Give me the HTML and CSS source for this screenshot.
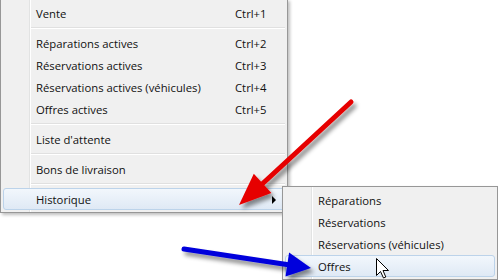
FILE: index.html
```html
<!DOCTYPE html>
<html lang="fr">
<head>
<meta charset="utf-8">
<link rel="stylesheet" href="styles.css">
</head>
<body>
<div class="page">
  <div class="menu main-menu">
    <div class="item"><span class="label">Vente</span><span class="key">Ctrl+1</span></div>
    <div class="sep"></div>
    <div class="item"><span class="label">Réparations actives</span><span class="key">Ctrl+2</span></div>
    <div class="item"><span class="label">Réservations actives</span><span class="key">Ctrl+3</span></div>
    <div class="item"><span class="label">Réservations actives (véhicules)</span><span class="key">Ctrl+4</span></div>
    <div class="item"><span class="label">Offres actives</span><span class="key">Ctrl+5</span></div>
    <div class="sep"></div>
    <div class="item"><span class="label">Liste d'attente</span></div>
    <div class="sep"></div>
    <div class="item"><span class="label">Bons de livraison</span></div>
    <div class="sep"></div>
    <div class="item active"><span class="label">Historique</span><span class="sub-arrow"></span></div>
  </div>

  <div class="menu submenu">
    <div class="item"><span class="label">Réparations</span></div>
    <div class="item"><span class="label">Réservations</span></div>
    <div class="item"><span class="label">Réservations (véhicules)</span></div>
    <div class="item active"><span class="label">Offres</span></div>
  </div>

  <svg class="annotations" width="498" height="280" viewBox="0 0 498 280">
    <defs>
      <filter id="shadow" x="-20%" y="-20%" width="140%" height="140%">
        <feDropShadow dx="3" dy="4" stdDeviation="2" flood-color="#000" flood-opacity="0.45"/>
      </filter>
    </defs>
    <g filter="url(#shadow)">
      <line x1="351" y1="102" x2="260" y2="186" stroke="#e60000" stroke-width="5" stroke-linecap="round"/>
      <polygon points="239,205 271.4,192.9 253.8,173.7" fill="#e60000"/>
    </g>
    <g filter="url(#shadow)">
      <line x1="184" y1="249" x2="290" y2="265" stroke="#0000dc" stroke-width="5" stroke-linecap="round"/>
      <polygon points="311,268 285.5,276.4 289.1,252.6" fill="#0000dc"/>
    </g>
    <path class="cursor" d="M376.5,258.5 L376.5,275.5 L380.5,271.5 L383.5,278 L385.8,277 L383,270.5 L388.5,270.5 Z" fill="#fff" stroke="#000" stroke-width="1" stroke-linejoin="miter"/>
  </svg>
</div>
</body>
</html>
```

FILE: styles.css
```css
html, body {
  margin: 0;
  padding: 0;
  background: #fff;
}

.page {
  position: relative;
  width: 498px;
  height: 280px;
  overflow: hidden;
  font-family: "Open Sans", "Noto Sans", sans-serif;
  font-size: 11.3px;
  color: #111;
}

.menu {
  box-sizing: border-box;
  border: 1px solid #979797;
  background:
    linear-gradient(to right,
      transparent 28px, #e2e3e3 28px, #e2e3e3 29px,
      #ffffff 29px, #ffffff 30px, transparent 30px),
    #f0f0f0;
  padding: 2px 0;
  display: flex;
  flex-direction: column;
  box-shadow: 2px 2px 3px rgba(0, 0, 0, 0.25);
}

.main-menu {
  width: 288px;
  margin-top: -1px;
}

.submenu {
  position: absolute;
  left: 282px;
  top: 186px;
  width: 216px;
}

.item {
  box-sizing: border-box;
  height: 22px;
  margin: 0 2px;
  display: grid;
  grid-template-columns: 199px 1fr;
  align-items: center;
  padding-left: 32px;
  border: 1px solid transparent;
  border-radius: 3px;
  line-height: 20px;
  white-space: nowrap;
}

.label {
  padding-top: 1px;
}

.key {
  padding-top: 1px;
}

.item.active {
  border-color: #bcd3ea;
  background: linear-gradient(#f2f7fc, #dfe9f5);
}

.submenu .item {
  grid-template-columns: 1fr;
}

.sep {
  height: 8px;
  margin-left: 30px;
  margin-right: 2px;
  background: linear-gradient(to bottom,
    transparent 3px, #e0e0e0 3px, #e0e0e0 4px,
    #ffffff 4px, #ffffff 5px, transparent 5px);
}

.sub-arrow {
  justify-self: end;
  margin-right: 8px;
  width: 0;
  height: 0;
  border-top: 4px solid transparent;
  border-bottom: 4px solid transparent;
  border-left: 4px solid #000;
}

.annotations {
  position: absolute;
  left: 0;
  top: 0;
  pointer-events: none;
}
```
